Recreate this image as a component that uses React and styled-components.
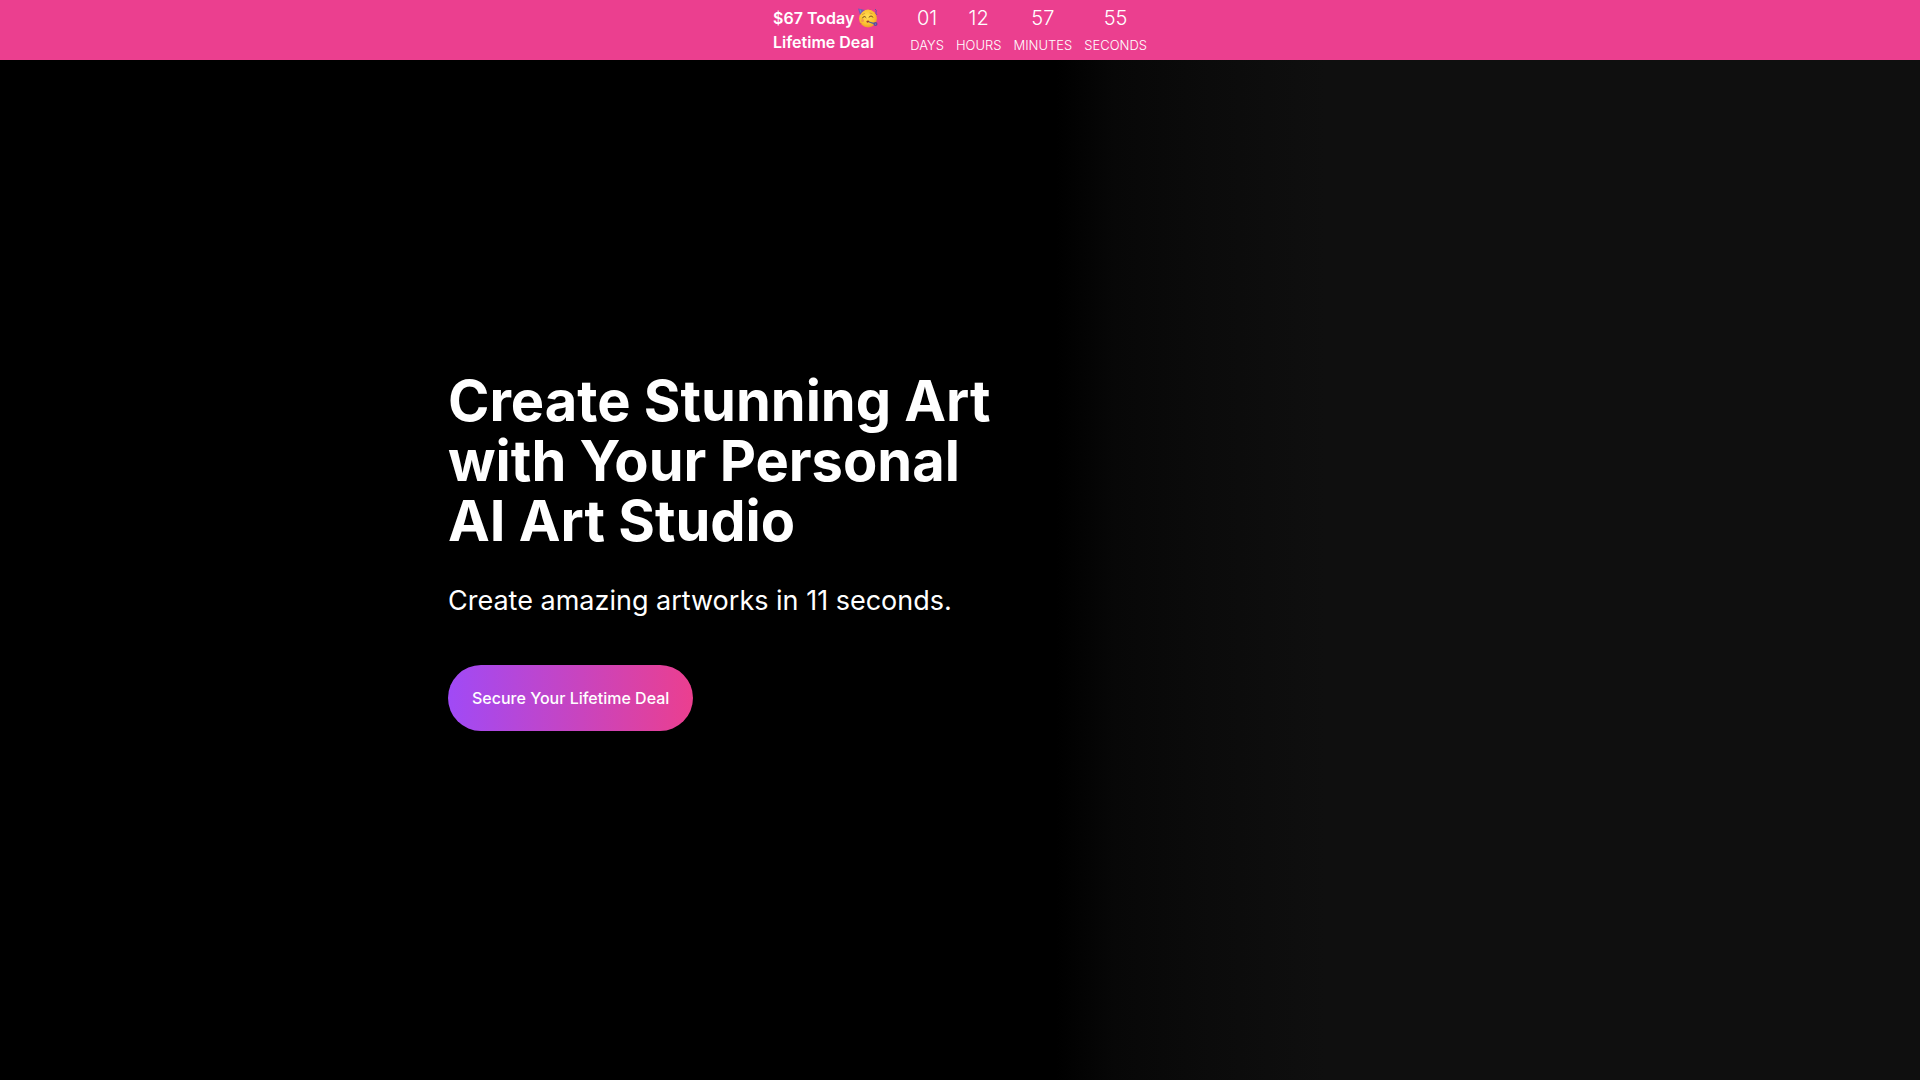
import React from "react";
import styled, { createGlobalStyle } from "styled-components";

const GlobalStyle = createGlobalStyle`
  * {
    box-sizing: border-box;
  }

  body {
    margin: 0;
    background: #0f0f0f;
    color: #fff;
    font-family: Inter, "Liberation Sans", sans-serif;
  }
`;

const Page = styled.div`
  display: flex;
  flex-direction: column;
  min-height: 100vh;
`;

const Banner = styled.header`
  display: flex;
  justify-content: center;
  align-items: center;
  gap: 32px;
  padding: 5px 16px;
  background: #eb3f8f;
`;

const Deal = styled.p`
  margin: 0;
  font-size: 16px;
  font-weight: 600;
  line-height: 24px;
`;

const DealLine = styled.span`
  display: flex;
  align-items: center;
  gap: 4px;
`;

const Emoji = styled.svg`
  width: 20px;
  height: 20px;
`;

const Timer = styled.div`
  display: flex;
  gap: 12px;
  font-weight: 300;
  text-align: center;
`;

const Value = styled.div`
  font-size: 20px;
  line-height: 26px;
`;

const Unit = styled.div`
  padding-top: 4px;
  font-size: 13px;
  line-height: 20px;
  text-transform: uppercase;
`;

const Hero = styled.main`
  flex: 1;
  display: flex;
  align-items: center;
  padding: 0 24px 38px;
  background: linear-gradient(
    to right,
    #000 55%,
    #070707 58%,
    #0b0b0b 63%,
    #0f0f0f 69%
  );
`;

const Container = styled.div`
  width: 100%;
  max-width: 1024px;
  margin: 0 auto;
`;

const Copy = styled.div`
  max-width: 560px;
`;

const Title = styled.h1`
  margin: 0;
  font-size: 56px;
  font-weight: 700;
  line-height: 60px;
`;

const Subtitle = styled.p`
  margin: 32px 0 46px;
  font-size: 27px;
  line-height: 36px;
`;

const Button = styled.button`
  padding: 21px 24px;
  border: 0;
  border-radius: 33px;
  background: linear-gradient(to right, #a04af6, #eb3f8f);
  color: #fff;
  font-family: inherit;
  font-size: 16px;
  font-weight: 500;
  line-height: 24px;
  cursor: pointer;
`;

const time = [
  { unit: "Days", value: "01" },
  { unit: "Hours", value: "12" },
  { unit: "Minutes", value: "57" },
  { unit: "Seconds", value: "55" },
];

const PartyFace = () => (
  <Emoji viewBox="0 0 40 40" role="img" aria-label="Partying face">
    <defs>
      <radialGradient id="skin" cx="0.45" cy="0.4" r="0.6">
        <stop offset="0" stopColor="#ffdf55" />
        <stop offset="0.7" stopColor="#fbc02f" />
        <stop offset="1" stopColor="#ee9a2b" />
      </radialGradient>
    </defs>
    <circle cx="20" cy="21" r="18" fill="url(#skin)" />
    <path d="M0 1 L14 4 Q7 8 4 14 Z" fill="#7657b8" />
    <path d="M4 3 L6 9" stroke="#4fa7dc" strokeWidth="2" />
    <path
      d="M9 20 Q12 14 16 19 M22 18 Q26 13 30 18"
      stroke="#7a4a1c"
      strokeWidth="2"
      strokeLinecap="round"
      fill="none"
    />
    <path
      d="M9 13 L13 11 M24 10 L28 11"
      stroke="#b4752a"
      strokeWidth="1"
      strokeLinecap="round"
    />
    <circle cx="9" cy="25" r="3" fill="#f79a4b" />
    <path d="M17 26 Q21 24 23 27 Q20 31 17 28 Z" fill="#963a35" />
    <path d="M22 27 L34 30 L33 33 L22 29 Z" fill="#53649b" />
    <circle cx="35" cy="32" r="4" fill="#604b9c" />
    <circle cx="35" cy="32" r="1" fill="#87a9d3" />
    <path
      d="M34 2 Q38 4 36 8 Q35 11 38 14"
      stroke="#6450a5"
      strokeWidth="2"
      fill="none"
    />
    <circle cx="24" cy="3" r="1" fill="#e95347" />
    <circle cx="5" cy="32" r="2" fill="#dc5660" />
  </Emoji>
);

export default function App() {
  return (
    <Page>
      <GlobalStyle />
      <Banner>
        <Deal>
          <DealLine>
            $67 Today <PartyFace />
          </DealLine>
          <DealLine>Lifetime Deal</DealLine>
        </Deal>
        <Timer>
          {time.map(({ unit, value }) => (
            <div key={unit}>
              <Value>{value}</Value>
              <Unit>{unit}</Unit>
            </div>
          ))}
        </Timer>
      </Banner>
      <Hero>
        <Container>
          <Copy>
            <Title>Create Stunning Art with Your Personal AI Art Studio</Title>
            <Subtitle>Create amazing artworks in 11 seconds.</Subtitle>
            <Button type="button">Secure Your Lifetime Deal</Button>
          </Copy>
        </Container>
      </Hero>
    </Page>
  );
}
